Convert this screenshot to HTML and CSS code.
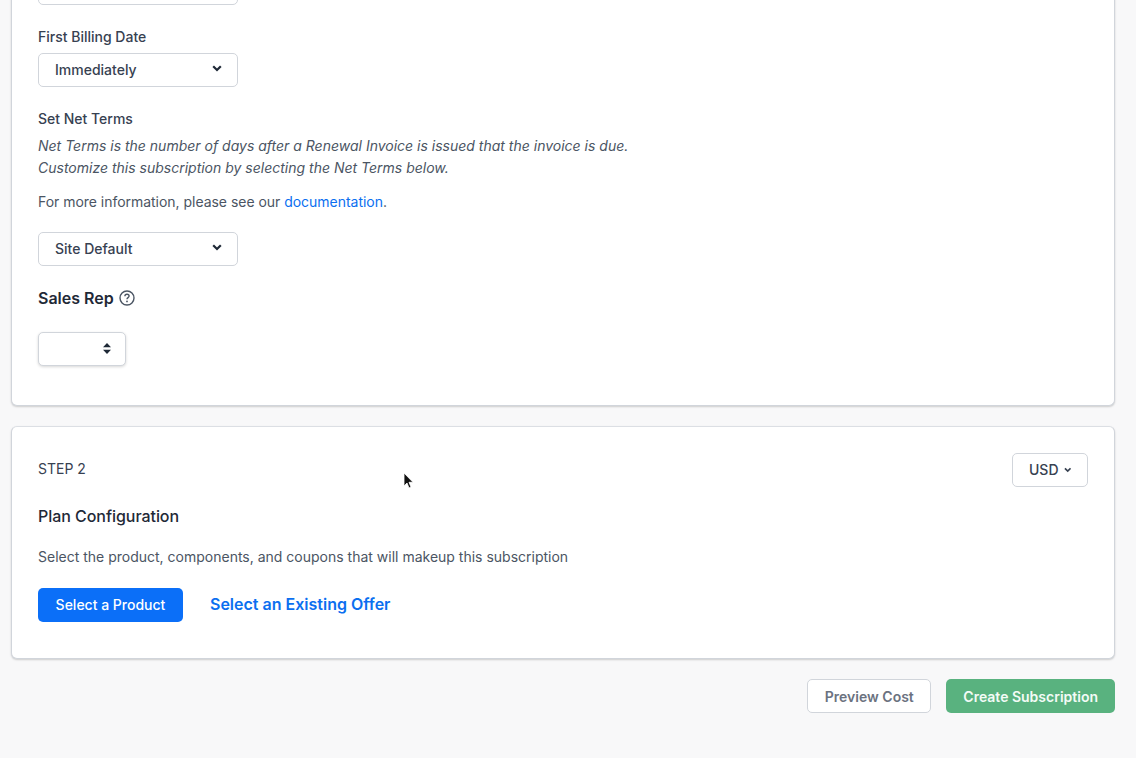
FILE: index.html
```html
<!DOCTYPE html>
<html lang="en">
<head>
<meta charset="utf-8">
<title>Create Subscription</title>
<link rel="stylesheet" href="styles.css">
</head>
<body>
<main class="page">
  <section class="card card-first">
    <div class="select select-wide"></div>
    <label class="label label-billing">First Billing Date</label>
    <div class="select select-wide">
      <span>Immediately</span>
      <svg class="chev" width="10" height="7" viewBox="0 0 10 7"><path d="M1.2 1.2 5 5l3.8-3.800" fill="none" stroke="#1f2937" stroke-width="2.2"/></svg>
    </div>
    <label class="label label-net">Set Net Terms</label>
    <p class="note">Net Terms is the number of days after a Renewal Invoice is issued that the invoice is due.<br>Customize this subscription by selecting the Net Terms below.</p>
    <p class="info">For more information, please see our <a class="link" href="#">documentation</a>.</p>
    <div class="select select-wide">
      <span>Site Default</span>
      <svg class="chev" width="10" height="7" viewBox="0 0 10 7"><path d="M1.2 1.2 5 5l3.8-3.800" fill="none" stroke="#1f2937" stroke-width="2.2"/></svg>
    </div>
    <div class="rep-title">
      <span>Sales Rep</span>
      <svg width="16" height="16" viewBox="0 0 16 16"><circle cx="8" cy="8" r="7" fill="none" stroke="#4b5563" stroke-width="1.4"/><path d="M5.900 6.200c0-1.200 1-2 2.100-2s2.100.8 2.100 1.900c0 1.500-2.100 1.600-2.100 3.100" fill="none" stroke="#4b5563" stroke-width="1.4"/><circle cx="8" cy="11.400" r=".9" fill="#4b5563"/></svg>
    </div>
    <div class="select select-small">
      <svg class="updown" width="8" height="11" viewBox="0 0 8 11"><path d="M4 0 8 4.300H0ZM4 11 0 6.700h8Z" fill="#1f2937"/></svg>
    </div>
  </section>

  <section class="card card-second">
    <div class="step-row">
      <span class="step">STEP 2</span>
      <button class="btn btn-currency">USD
        <svg width="8" height="6" viewBox="0 0 8 6"><path d="M1 1.200 4 4.200l3-3" fill="none" stroke="#374151" stroke-width="1.800"/></svg>
      </button>
    </div>
    <h2 class="plan-title">Plan Configuration</h2>
    <p class="plan-desc">Select the product, components, and coupons that will makeup this subscription</p>
    <div class="plan-actions">
      <button class="btn btn-primary">Select a Product</button>
      <a class="link link-strong" href="#">Select an Existing Offer</a>
    </div>
  </section>

  <div class="footer-actions">
    <button class="btn btn-ghost">Preview Cost</button>
    <button class="btn btn-success">Create Subscription</button>
  </div>
</main>
<svg class="cursor" width="12" height="18" viewBox="0 0 12 18"><path d="M1 1v13l3-3 2 5 2-1-2-4.700h4Z" fill="#111" stroke="#fff" stroke-width=".8"/></svg>
</body>
</html>
```
FILE: styles.css
```css
* { box-sizing: border-box; }
html, body { margin: 0; height: 100%; overflow: hidden; }
body {
  background: #f8f8f9;
  font-family: Inter, "Liberation Sans", sans-serif;
  font-size: 14px;
  color: #374151;
  position: relative;
}
.page { padding: 0 21px 0 11px; height: 758px; overflow: hidden; }
.card {
  background: #fff;
  border-radius: 6px;
  border: 1px solid #d1d5db;
  border-top-color: #dcdfe4;
  box-shadow: 0 1px 2px rgba(0,0,0,.18);
  padding: 0 26px;
}
.card-first {
  margin-top: -30px;
  height: 436px;
}
.card-second {
  margin-top: 20px;
  height: 233px;
  padding-top: 26px;
}
.select {
  display: flex;
  align-items: center;
  justify-content: space-between;
  height: 34px;
  padding-bottom: 1px;
  background: #fff;
  border: 1px solid #d1d5db;
  border-radius: 5px;
  color: #374151;
  font-weight: 500;
}
.select-wide { width: 200px; padding-left: 16px; padding-right: 16px; }
.select-small {
  width: 88px;
  justify-content: flex-end;
  padding-right: 14px;
  margin-top: 24px;
  box-shadow: 0 1px 3px rgba(0,0,0,.16);
}
.chev { margin-top: -3px; margin-right: -1px; }
.label { display: block; line-height: 20px; color: #374151; font-weight: 500; }
.label-billing { margin-top: 22px; margin-bottom: 6px; }
.label-net { margin-top: 22px; }
.note {
  margin: 6px 0 0;
  font-style: italic;
  line-height: 22px;
  color: #4b5563;
}
.info { margin: 12px 0 0; line-height: 22px; color: #4b5563; letter-spacing: -.03px; }
.info + .select { margin-top: 19px; }
.link { color: #0b6ff0; text-decoration: none; }
.rep-title {
  display: flex;
  align-items: center;
  gap: 5px;
  margin-top: 22px;
  height: 20px;
  font-size: 16px;
  font-weight: 600;
  color: #1f2937;
}
.step-row { display: flex; align-items: center; justify-content: space-between; height: 34px; }
.step { color: #374151; margin-top: -3px; }
.btn {
  font-family: inherit;
  font-size: 14px;
  font-weight: 500;
  height: 34px;
  border-radius: 5px;
  border: 1px solid transparent;
  padding: 0 16px 1px;
}
.btn-currency {
  display: flex;
  align-items: center;
  gap: 5px;
  width: 76px;
  background: #fff;
  border-color: #d1d5db;
  color: #374151;
}
.plan-title {
  margin: 18px 0 0;
  font-size: 16px;
  font-weight: 500;
  line-height: 22px;
  color: #1f2937;
  letter-spacing: -.05px;
}
.plan-desc { margin: 19px 0 0; line-height: 22px; color: #4b5563; }
.plan-actions { display: flex; align-items: center; gap: 27px; margin-top: 20px; }
.btn-primary { background: #0b6ff8; color: #fff; width: 145px; padding-left: 0; padding-right: 0; }
.link-strong { font-size: 16px; font-weight: 600; margin-top: -2px; }
.footer-actions { display: flex; justify-content: flex-end; gap: 15px; margin-top: 20px; }
.footer-actions .btn { padding-bottom: 0; }
.btn-ghost { background: #fff; border-color: #d1d5db; color: #6b7280; font-weight: 600; width: 124px; padding-left: 0; padding-right: 0; }
.btn-success { background: #59b27f; color: #f3fbf6; font-weight: 600; }
.cursor { position: absolute; left: 403px; top: 472px; }
```
